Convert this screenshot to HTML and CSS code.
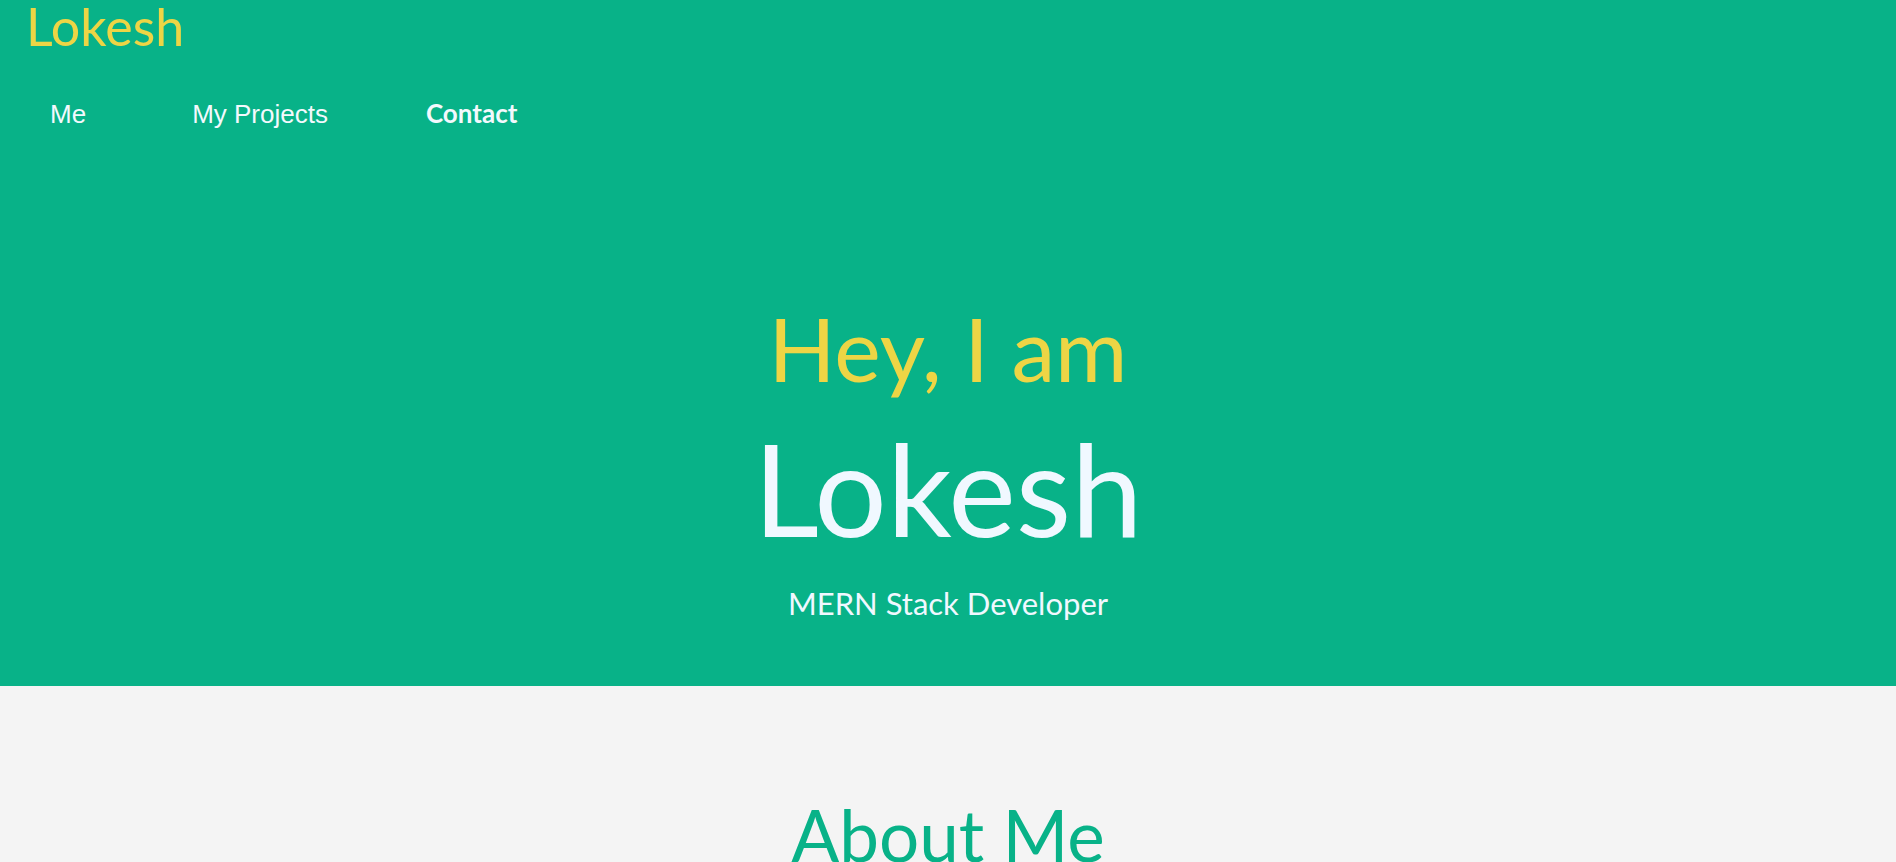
FILE: index.html
```html
<!DOCTYPE html>
<html lang="en">
<head>
<meta charset="utf-8">
<title>Lokesh</title>
<link rel="stylesheet" href="styles.css">
</head>
<body>
<header class="hero">
  <div class="logo">Lokesh</div>
  <nav class="nav">
    <a class="nav-link" href="#me">Me</a>
    <a class="nav-link" href="#projects">My Projects</a>
    <a class="nav-link nav-link--active" href="#contact">Contact</a>
  </nav>
  <div class="intro">
    <h2 class="intro-hey">Hey, I am</h2>
    <h1 class="intro-name">Lokesh</h1>
    <p class="intro-role">MERN Stack Developer</p>
  </div>
</header>
<section class="about" id="me">
  <h2 class="about-title">About Me</h2>
  <p class="about-text">I build full stack web applications with MongoDB, Express, React and Node.js.</p>
</section>
</body>
</html>
```
FILE: styles.css
```css
html, body {
  margin: 0;
  padding: 0;
}
body {
  font-family: "Comic Sans MS", Lato, sans-serif;
  background: #f4f4f4;
}
.hero {
  background: #08b288;
  padding-bottom: 63px;
}
.logo {
  color: #edd545;
  font-size: 52px;
  line-height: 52px;
  padding-left: 26px;
}
.nav {
  display: flex;
  align-items: baseline;
  gap: 106px;
  margin-top: 46px;
  padding-left: 50px;
  height: 30px;
}
.nav-link {
  color: #f3f9fd;
  text-decoration: none;
  font-family: "Liberation Sans", Arial, sans-serif;
  font-size: 26px;
  line-height: 30px;
}
.nav-link--active {
  font-family: "Comic Sans MS", Lato, sans-serif;
  font-weight: 700;
  margin-left: -8px;
}
.intro {
  display: flex;
  flex-direction: column;
  align-items: center;
  margin-top: 170px;
}
.intro-hey {
  margin: 0;
  color: #edd545;
  font-weight: 400;
  font-size: 88px;
  line-height: 100px;
}
.intro-name {
  margin: 20px 0 0;
  color: #f0f8ff;
  font-weight: 400;
  font-size: 128px;
  line-height: 140px;
}
.intro-role {
  margin: 25px 0 0;
  color: #f0f8ff;
  font-size: 31px;
  line-height: 40px;
}
.about {
  padding-top: 107px;
  text-align: center;
}
.about-title {
  margin: 0;
  color: #08b288;
  font-weight: 400;
  font-size: 71px;
  line-height: 84px;
}
.about-text {
  margin: 30px 0 0;
  font-size: 20px;
  color: #333;
}
```
